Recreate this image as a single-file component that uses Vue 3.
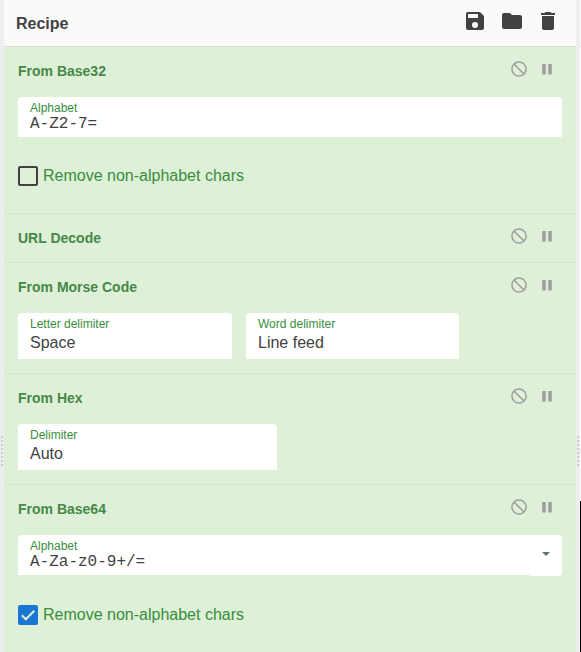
<script setup>
const operations = [
  { name: 'From Base32', fields: [{ label: 'Alphabet', value: 'A-Z2-7=', mono: true, size: 'full' }], check: { label: 'Remove non-alphabet chars', on: false } },
  { name: 'URL Decode', fields: [] },
  { name: 'From Morse Code', fields: [
    { label: 'Letter delimiter', value: 'Space', size: 'half-a' },
    { label: 'Word delimiter', value: 'Line feed', size: 'half-b' },
  ] },
  { name: 'From Hex', fields: [{ label: 'Delimiter', value: 'Auto', size: 'medium' }] },
  { name: 'From Base64', fields: [{ label: 'Alphabet', value: 'A-Za-z0-9+/=', mono: true, size: 'full', menu: true }], check: { label: 'Remove non-alphabet chars', on: true } },
]
</script>

<template>
  <div class="workspace">
    <div class="gutter"><div class="grip"><i v-for="n in 8" :key="n"></i></div></div>
    <main class="recipe">
      <header class="title-bar">
        <span class="title">Recipe</span>
        <div class="controls">
          <svg class="save" viewBox="0 0 24 24"><path d="M17 3H5a2 2 0 0 0-2 2v14a2 2 0 0 0 2 2h14c1.1 0 2-.9 2-2V7l-4-4zm-5 16a3 3 0 1 1 0-6 3 3 0 0 1 0 6zm3-10H5V5h10v4z" /></svg>
          <svg class="folder" viewBox="0 0 24 24"><path d="M10 4H4c-1.1 0-2 .9-2 2v12c0 1.1.9 2 2 2h16c1.1 0 2-.9 2-2V8c0-1.1-.9-2-2-2h-8l-2-2z" /></svg>
          <svg viewBox="0 0 24 24"><path d="M6 19c0 1.1.9 2 2 2h8c1.1 0 2-.9 2-2V7H6v12zM19 4h-3.500l-1-1h-5l-1 1H5v2h14V4z" /></svg>
        </div>
      </header>
      <section v-for="op in operations" :key="op.name" class="operation">
        <div class="op-head">
          <span class="op-name">{{ op.name }}</span>
          <div class="op-icons">
            <svg class="block" viewBox="0 0 18 18"><circle cx="9" cy="9" r="7.100" /><path d="M4 4l10 10" /></svg>
            <svg class="pause" viewBox="0 0 10 11"><path d="M.2 0h3.500v10.500H.2zM6.300 0h3.500v10.500H6.300z" /></svg>
          </div>
        </div>
        <div v-if="op.fields.length" class="fields">
          <div v-for="f in op.fields" :key="f.label" class="field" :class="[f.size, { mono: f.mono }]">
            <span class="label">{{ f.label }}</span>
            <span class="value">{{ f.value }}</span>
            <div v-if="f.menu" class="menu"><i></i></div>
          </div>
        </div>
        <div v-if="op.check" class="check" :class="{ checked: op.check.on }">
          <span class="box" :class="{ on: op.check.on }">
            <svg v-if="op.check.on" viewBox="0 0 20 20"><path d="M3.800 10.300l4 4L16.300 5.800" /></svg>
          </span>
          <span>{{ op.check.label }}</span>
        </div>
      </section>
    </main>
    <div class="gutter"><div class="grip"><i v-for="n in 8" :key="n"></i></div></div>
    <div class="neighbour"><div class="upper"></div><div class="divider"></div><div class="lower"></div><div class="dark"></div></div>
  </div>
</template>

<style>
body { margin: 0; overflow: hidden; }
</style>

<style scoped>
.workspace { display: flex; width: 581px; height: 652px; overflow: hidden; background: #fff; font-family: "Liberation Sans", Arial, sans-serif; }
.gutter { width: 4px; flex: none; background: #eee; padding-top: 436px; box-sizing: border-box; }
.grip { display: flex; flex-direction: column; gap: 2px; padding-left: 1px; }
.grip i { width: 2px; height: 2px; background: #ccc; }
.recipe { width: 572px; flex: none; background: #dff0d8; overflow: hidden; }
.title-bar { height: 47px; box-sizing: border-box; border-bottom: 1px solid #ddd; background: #fafafa; display: flex; justify-content: space-between; padding: 0 16px 0 12px; color: #424242; }
.title { font-size: 16px; line-height: 48px; height: 46px; font-weight: 700; }
.controls { display: flex; padding-top: 9px; }
.controls svg { width: 24px; height: 24px; fill: #424242; }
.controls .save { margin-right: 13px; }
.controls .folder { margin-right: 12px; }
.operation { border-bottom: 1px solid #d3e9bf; padding: 14px; color: #3c8c40; }
.operation:last-child { border-bottom: 0; }
.op-head { height: 20px; display: flex; justify-content: space-between; }
.op-name { font-size: 14px; line-height: 20px; font-weight: 700; color: #468847; }
.op-icons { display: flex; align-items: flex-start; padding-right: 10px; gap: 14px; }
.block { width: 18px; height: 18px; margin-top: -1px; fill: none; stroke: #9e9e9e; stroke-width: 1.500; }
.pause { width: 10px; height: 11px; margin-top: 3px; fill: #9e9e9e; }
.fields { display: flex; gap: 14px; margin-top: 16px; }
.field { position: relative; box-sizing: border-box; height: 46px; padding: 3px 12px 0; background: #fff; border-radius: 4px 4px 0 0; display: flex; flex-direction: column; }
.full { width: 544px; }
.half-a { width: 214px; }
.half-b { width: 213px; }
.medium { width: 259px; }
.label { font-size: 12px; line-height: 16px; height: 16px; color: #388e3c; }
.value { font-size: 16px; line-height: 22px; color: #424242; }
.mono { height: 40px; }
.mono .value { font-family: "Liberation Mono", monospace; line-height: 16px; }
.menu { position: absolute; right: 0; top: 0; width: 32px; height: 41px; background: #fff; border-radius: 0 4px 4px 0; display: flex; align-items: center; justify-content: center; }
.menu i { border: 4px solid transparent; border-top-color: #607078; border-bottom: 0; margin-top: -3px; }
.check { height: 20px; margin: 29px 0 13px; display: flex; align-items: center; gap: 5px; font-size: 16px; line-height: 20px; color: #388e3c; }
.checked { margin-top: 30px; }
.box { width: 20px; height: 20px; box-sizing: border-box; border: 2px solid #424242; border-radius: 2px; }
.box.on { border: 0; background: #1976d2; }
.box svg { display: block; width: 20px; height: 20px; }
.box path { fill: none; stroke: #dff0d8; stroke-width: 2; }
.neighbour { width: 1px; flex: none; }
.upper { height: 46px; background: #fafafa; border-bottom: 1px solid #ddd; }
.divider { height: 402px; background: #fff; }
.lower { height: 4px; background: #eee; border-bottom: 48px solid #fafafa; }
.dark { height: 151px; background: #000; }
</style>
